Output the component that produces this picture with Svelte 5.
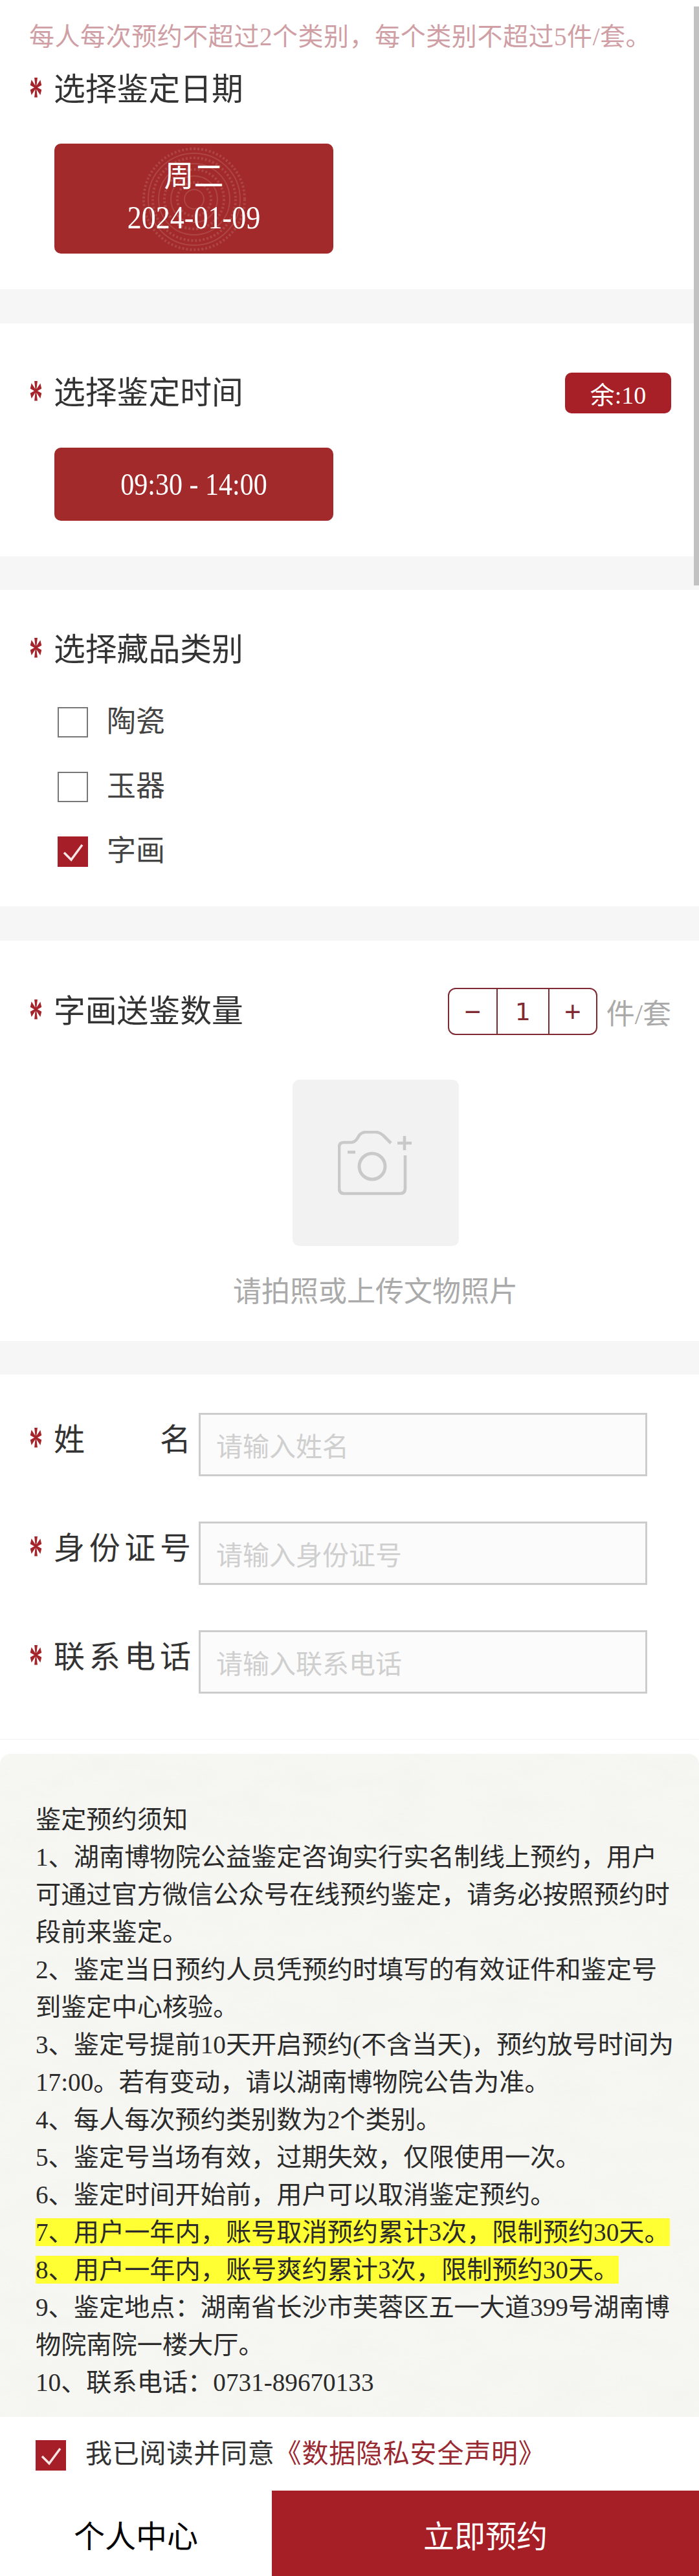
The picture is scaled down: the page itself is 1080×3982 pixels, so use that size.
<script>
  const cats = [
    { name: '陶瓷', on: false },
    { name: '玉器', on: false },
    { name: '字画', on: true }
  ];
  const fields = [
    { label: '姓名', ph: '请输入姓名' },
    { label: '身份证号', ph: '请输入身份证号' },
    { label: '联系电话', ph: '请输入联系电话' }
  ];
  const notes = [
    '1、湖南博物院公益鉴定咨询实行实名制线上预约，用户可通过官方微信公众号在线预约鉴定，请务必按照预约时段前来鉴定。',
    '2、鉴定当日预约人员凭预约时填写的有效证件和鉴定号到鉴定中心核验。',
    '3、鉴定号提前10天开启预约(不含当天)，预约放号时间为17:00。若有变动，请以湖南博物院公告为准。',
    '4、每人每次预约类别数为2个类别。',
    '5、鉴定号当场有效，过期失效，仅限使用一次。',
    '6、鉴定时间开始前，用户可以取消鉴定预约。'
  ];
  const rings = [78, 71, 64, 55, 46, 36, 26, 15];
</script>

<div class="page">
  <div class="scrollbar"></div>

  <section class="card s1">
    <p class="hint">每人每次预约不超过2个类别，每个类别不超过5件/套。</p>
    <div class="head"><span class="star">*</span><h2>选择鉴定日期</h2></div>
    <div class="btn date">
      <svg class="seal" width="170" height="170" viewBox="-85 -85 170 170" aria-hidden="true">
        {#each rings as r, i}
          <circle {r} fill="none" stroke="#fff" stroke-opacity="0.13" stroke-width={i % 2 ? 2 : 4} stroke-dasharray={i % 2 ? 'none' : '3 3'} />
        {/each}
      </svg>
      <span class="week">周二</span>
      <span class="day">2024-01-09</span>
    </div>
  </section>

  <section class="card s2">
    <div class="head between">
      <div class="head-l"><span class="star">*</span><h2>选择鉴定时间</h2></div>
      <span class="badge">余:10</span>
    </div>
    <div class="btn time"><span>09:30 - 14:00</span></div>
  </section>

  <section class="card s3">
    <div class="head flat"><span class="star">*</span><h2>选择藏品类别</h2></div>
    <ul class="cats">
      {#each cats as c}
        <li>
          <span class="box" class:on={c.on}>
            {#if c.on}
              <svg width="47" height="47" viewBox="0 0 47 47" aria-hidden="true"><polyline points="10,25 21,36 38,13" fill="none" stroke="#f8e6e6" stroke-width="3.5" /></svg>
            {/if}
          </span>
          <span class="cat-name">{c.name}</span>
        </li>
      {/each}
    </ul>
  </section>

  <section class="card s4">
    <div class="head between">
      <div class="head-l"><span class="star">*</span><h2>字画送鉴数量</h2></div>
      <div class="qty">
        <div class="stepper">
          <span class="st minus">−</span>
          <span class="st val">1</span>
          <span class="st plus">+</span>
        </div>
        <span class="unit">件/套</span>
      </div>
    </div>
    <div class="upload">
      <div class="up-box">
        <svg width="116" height="100" viewBox="0 0 116 100" fill="none" stroke="#c9c9c9" stroke-width="4.6" aria-hidden="true">
          <path d="M82 19 L70 7 Q64 2 58 2 L44 2 Q37 2 33 7 L30 12 Q26 18 20 18 L9 18 Q2 18 2 25 L2 89 Q2 97 10 97 L96 97 Q104 97 104 89 L104 38" />
          <circle cx="53" cy="55" r="20" stroke-width="5" />
          <path d="M15 33 H27" />
          <path d="M92 19 H114 M103 8 V30" />
        </svg>
      </div>
      <p class="up-text">请拍照或上传文物照片</p>
    </div>
  </section>

  <section class="card s5">
    {#each fields as f}
      <div class="field">
        <span class="star">*</span>
        <label class="f-label" for={f.label}>{f.label}</label>
        <input id={f.label} type="text" placeholder={f.ph} />
      </div>
    {/each}
  </section>

  <div class="paper-wrap">
    <section class="paper">
      <svg class="grain" width="1080" height="1025" aria-hidden="true">
        <filter id="paperNoise"><feTurbulence type="fractalNoise" baseFrequency="0.012 0.03" numOctaves="4" seed="4" /><feColorMatrix values="0 0 0 0 0.55  0 0 0 0 0.55  0 0 0 0 0.5  0 0 0 0.5 -0.17" /></filter>
        <rect width="1080" height="1025" filter="url(#paperNoise)" opacity="0.12" />
      </svg>
      <div class="notes">
        <p>鉴定预约须知</p>
        {#each notes as n}<p>{n}</p>{/each}
        <p><span class="mark">7、用户一年内，账号取消预约累计3次，限制预约30天。</span></p>
        <p><span class="mark">8、用户一年内，账号爽约累计3次，限制预约30天。</span></p>
        <p>9、鉴定地点：湖南省长沙市芙蓉区五一大道399号湖南博物院南院一楼大厅。</p>
        <p>10、联系电话：0731-89670133</p>
      </div>
    </section>
  </div>

  <div class="agree">
    <span class="box on">
      <svg width="47" height="47" viewBox="0 0 47 47" aria-hidden="true"><polyline points="10,25 21,36 38,13" fill="none" stroke="#f8e6e6" stroke-width="3.5" /></svg>
    </span>
    <p>我已阅读并同意<span class="link">《数据隐私安全声明》</span></p>
  </div>

  <footer>
    <button class="center">个人中心</button>
    <button class="go">立即预约</button>
  </footer>
</div>

<style>
  :global(body) { margin: 0; background: #fff; }
  .page {
    position: relative;
    width: 1080px;
    overflow: hidden;
    font-family: "Liberation Serif", "Noto Sans CJK SC", serif;
    color: #333;
    background: #f6f6f6;
  }
  .scrollbar {
    position: absolute;
    top: 10px;
    right: 0;
    width: 8px;
    height: 895px;
    background: #c2c2c2;
    z-index: 2;
  }
  p, h2, ul { margin: 0; padding: 0; }
  h2 { font-size: 48.8px; line-height: 60px; font-weight: 400; color: #333; }
  .card { background: #fff; padding-left: 45px; box-sizing: border-box; }
  .s1 { padding-top: 32px; padding-bottom: 55px; margin-bottom: 53px; }
  .s2 { padding-top: 76px; padding-bottom: 55px; margin-bottom: 52px; }
  .s3 { padding-top: 63px; padding-bottom: 61px; margin-bottom: 53px; }
  .s4 { padding-top: 73px; padding-bottom: 50px; margin-bottom: 52px; }
  .s5 { position: relative; padding-top: 59px; padding-bottom: 93px; display: flex; flex-direction: column; gap: 70px; }
  .s5::after { content: ""; position: absolute; left: 0; right: 0; bottom: 22px; height: 1px; background: #f2f2f2; }
  .hint { font-size: 39px; line-height: 50px; letter-spacing: 0.55px; color: #cf9fa5; white-space: nowrap; }
  .head { display: flex; align-items: center; margin-top: 27px; }
  .head.flat { margin-top: 0; }
  .head-l { display: flex; align-items: center; }
  .between { justify-content: space-between; padding-right: 43px; margin-top: 0; }
  .star {
    display: inline-block;
    width: 38px;
    flex: none;
    font-size: 42px;
    font-weight: 700;
    line-height: 60px;
    color: #a5242c;
    transform: translateY(7px) scaleY(1.9);
  }
  .btn {
    position: relative;
    width: 431px;
    margin-left: 39px;
    margin-top: 53px;
    border-radius: 10px;
    background: #a32a2a;
    color: #fff;
    display: flex;
    flex-direction: column;
    align-items: center;
    justify-content: center;
    box-sizing: border-box;
  }
  .date { height: 170px; overflow: hidden; }
  .seal { position: absolute; left: 131px; top: 1px; }
  .week { position: relative; font-size: 46px; line-height: 52px; margin-top: -6px; }
  .day { position: relative; font-size: 44px; line-height: 50px; margin-top: 13px; transform: scaleY(1.15); }
  .time { height: 113px; font-size: 42px; }
  .time span { display: block; transform: scaleY(1.15); }
  .badge {
    width: 164px;
    height: 63px;
    border-radius: 10px;
    background: #a71f27;
    color: #fff;
    font-size: 38px;
    display: flex;
    align-items: center;
    justify-content: center;
  }
  .s2 .head { height: 63px; }
  .cats { list-style: none; margin: 58px 0 0 44px; display: flex; flex-direction: column; gap: 53px; }
  .cats li { display: flex; align-items: center; gap: 29px; height: 47px; }
  .box {
    flex: none;
    width: 47px;
    height: 47px;
    box-sizing: border-box;
    border: 2px solid #777;
    background: #fff;
    display: block;
  }
  .box.on { border: 0; background: #a61e28; }
  .box svg { display: block; }
  .cat-name { font-size: 45px; color: #444; line-height: 47px; }
  .qty { display: flex; align-items: center; gap: 14px; height: 73px; }
  .stepper {
    width: 231px;
    height: 73px;
    box-sizing: border-box;
    border: 2px solid #7f2a33;
    border-radius: 12px;
    display: grid;
    grid-template-columns: 73px 82px 1fr;
    color: #7f2a33;
  }
  .st { display: flex; align-items: center; justify-content: center; }
  .minus, .plus { font-family: "Liberation Sans", sans-serif; font-size: 44px; }
  .val { border-left: 2px solid #7f2a33; border-right: 2px solid #7f2a33; font-family: "DejaVu Sans", sans-serif; font-size: 38px; }
  .unit { font-size: 44px; color: #aaa; white-space: nowrap; }
  .upload { display: flex; flex-direction: column; align-items: center; margin-left: 35px; width: 1000px; }
  .up-box {
    margin-top: 69px;
    width: 257px;
    height: 257px;
    background: #f2f2f2;
    border-radius: 10px;
    display: flex;
    align-items: center;
    justify-content: center;
  }
  .up-text { margin-top: 47px; font-size: 44px; line-height: 50px; color: #aaa; white-space: nowrap; }
  .field { display: flex; align-items: center; height: 98px; }
  .field .star { margin-bottom: 14px; }
  .f-label {
    width: 212px;
    flex: none;
    font-size: 48px;
    line-height: 60px;
    color: #333;
    text-align: justify;
    text-align-last: justify;
    margin-bottom: 14px;
  }
  input {
    margin-left: 12px;
    width: 693px;
    height: 98px;
    box-sizing: border-box;
    border: 3px solid #ccc;
    border-radius: 0;
    background: #fbfbfb;
    padding: 0 24px;
    font-family: "Noto Sans CJK SC", sans-serif;
    font-size: 41px;
    outline: none;
  }
  input::placeholder { color: #cfcfcf; opacity: 1; }
  .paper-wrap { background: #fff; }
  .paper {
    position: relative;
    height: 1025px;
    box-sizing: border-box;
    background: #f6f6f2;
    border-radius: 16px 16px 0 0;
    padding: 73px 35px 0 55px;
    overflow: hidden;
  }
  .grain { position: absolute; left: 0; top: 0; }
  .notes { position: relative; font-size: 39.2px; line-height: 58px; color: #2b2b2b; }
  .mark { background: #ffff33; }
  .agree {
    display: flex;
    align-items: center;
    gap: 30px;
    height: 114px;
    box-sizing: border-box;
    padding: 4px 0 0 55px;
    background: #fff;
  }
  .agree p { font-size: 41px; letter-spacing: 0.8px; line-height: 50px; color: #333; white-space: nowrap; margin-top: -4px; }
  .link { color: #9a2a32; }
  footer { display: flex; height: 133px; background: #fff; }
  footer button {
    border: 0;
    padding: 0;
    font-family: inherit;
    font-size: 48px;
    cursor: pointer;
  }
  .center { width: 420px; background: #fff; color: #000; }
  .go { flex: 1; background: #a61e26; color: #fff; }
</style>
